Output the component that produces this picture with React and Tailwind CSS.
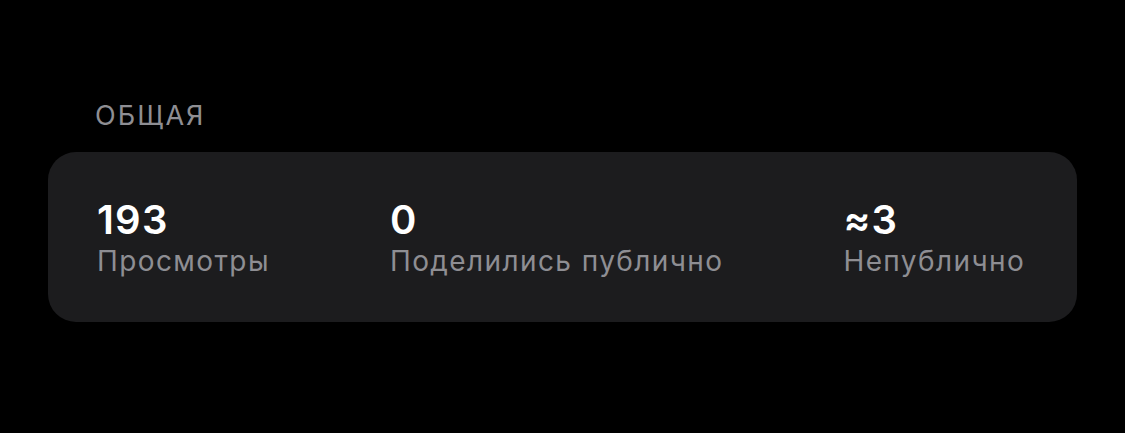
const STATS = [
  { value: '193', label: 'Просмотры' },
  { value: '0', label: 'Поделились публично' },
  { value: '≈3', label: 'Непублично' },
];

export default function App() {
  return (
    <div className="min-h-[433px] w-[1125px] bg-black pt-[99px] font-['Inter',sans-serif]">
      <div className="px-[48px]">
        {/* Section title */}
        <h2 className="pl-[47px] text-[27px] leading-[34px] uppercase tracking-[0.075em] text-[#8e8e93]">
          Общая
        </h2>

        {/* Stats card */}
        <div className="mt-[19px] flex h-[170px] items-center gap-[120px] rounded-[28px] bg-[#1c1c1e] px-[49px]">
          {STATS.map((s) => (
            <div key={s.label} className="flex shrink-0 flex-col whitespace-nowrap">
              <span className="text-[40px] font-semibold leading-[48px] tracking-[0.03em] text-white">{s.value}</span>
              <span className="text-[28px] leading-[34px] tracking-[0.05em] text-[#8e8e93]">{s.label}</span>
            </div>
          ))}
        </div>
      </div>
    </div>
  );
}
